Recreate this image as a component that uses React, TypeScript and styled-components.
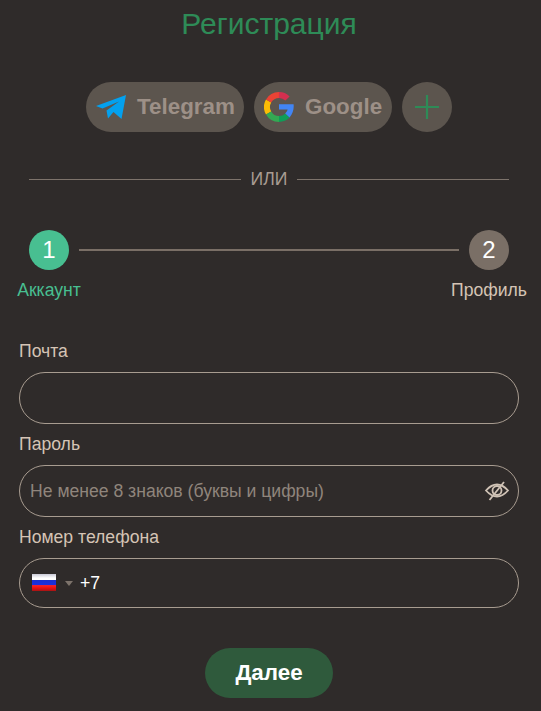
import { createGlobalStyle, styled } from 'styled-components';

const GlobalStyle = createGlobalStyle`
    html, body {
        margin: 0;
        padding: 0;
        background: #2f2b2a;
    }
    body {
        font-family: "Liberation Sans", Arial, sans-serif;
    }
`;

const Page = styled.div`
    width: 541px;
    height: 711px;
    overflow: hidden;
    box-sizing: border-box;
    padding: 8px 3px 0 0;
    background: #2f2b2a;
`;

const Title = styled.h1`
    margin: 0;
    text-align: center;
    font-size: 30px;
    line-height: 32px;
    font-weight: 400;
    color: #2e8b57;
`;

const Socials = styled.div`
    display: flex;
    justify-content: center;
    gap: 10px;
    margin-top: 42px;
`;

const SocialButton = styled.button<{ $width: number; $gap: number }>`
    display: flex;
    align-items: center;
    gap: ${(p) => p.$gap}px;
    width: ${(p) => p.$width}px;
    height: 50px;
    padding: 0 8px 0 10px;
    border: none;
    border-radius: 25px;
    background: #5c554e;
    color: #9d9087;
    font-family: inherit;
    font-size: 22.4px;
    font-weight: 700;

    svg {
        flex-shrink: 0;
    }
`;

const PlusButton = styled(SocialButton)`
    justify-content: center;
    padding: 0;
`;

const Divider = styled.div`
    display: flex;
    align-items: center;
    gap: 10px;
    margin: 38px 29px 0;
    height: 19px;
    font-size: 17.6px;
    color: #a89c92;

    &::before,
    &::after {
        content: '';
        flex: 1;
        height: 1px;
        background: #7d736b;
    }
`;

const Stepper = styled.div`
    display: flex;
    align-items: flex-start;
    gap: 10px;
    margin: 41px 29px 0;
`;

const Step = styled.div`
    display: flex;
    flex-direction: column;
    align-items: center;
    gap: 11px;
    width: 40px;
`;

const StepCircle = styled.div<{ $active?: boolean }>`
    display: flex;
    align-items: center;
    justify-content: center;
    width: 40px;
    height: 40px;
    border-radius: 50%;
    background: ${(p) => (p.$active ? '#48bf91' : '#7a6f66')};
    color: #fff;
    font-size: 24px;
`;

const StepLabel = styled.div<{ $active?: boolean }>`
    font-size: 17.6px;
    line-height: 18px;
    white-space: nowrap;
    color: ${(p) => (p.$active ? '#48bf91' : '#d5c4b5')};
`;

const StepLine = styled.div`
    flex: 1;
    height: 2px;
    margin-top: 19px;
    background: #7a6f66;
`;

const Form = styled.form`
    display: flex;
    flex-direction: column;
    margin: 43px 19px 0;
`;

const Label = styled.label`
    font-size: 17.6px;
    line-height: 18px;
    margin-bottom: 12px;
    color: #d5c4b5;
`;

const Field = styled.div<{ $height?: number }>`
    display: flex;
    align-items: center;
    box-sizing: border-box;
    height: ${(p) => p.$height ?? 52}px;
    margin-bottom: 11px;
    padding: 0 8px 0 10px;
    border: 1px solid #a89c90;
    border-radius: 26px;
`;

const Input = styled.input`
    flex: 1;
    min-width: 0;
    padding: 0;
    border: none;
    outline: none;
    background: transparent;
    color: #fff;
    font-family: inherit;
    font-size: 17.6px;

    &::placeholder {
        color: #8f857c;
        opacity: 1;
    }
`;

const Flag = styled.div`
    width: 24px;
    height: 17px;
    margin: -1px 0 0 2px;
    background: linear-gradient(
        to bottom,
        #c9c9d6 0%,
        #ffffff 24%,
        #ffffff 33%,
        #1a2fd0 38%,
        #1a2fe0 64%,
        #ff2020 68%,
        #e01010 85%,
        #a51515 100%
    );
`;

const Caret = styled.div`
    width: 0;
    height: 0;
    margin: 1px 7px 0 9px;
    border-left: 4px solid transparent;
    border-right: 4px solid transparent;
    border-top: 5px solid #7d736b;
`;

const DialCode = styled.span`
    font-size: 17.6px;
    color: #fff;
`;

const Actions = styled.div`
    display: flex;
    justify-content: center;
    margin-top: 29px;
`;

const NextButton = styled.button`
    width: 128px;
    height: 50px;
    border: none;
    border-radius: 25px;
    background: #2f5a3c;
    color: #fff;
    font-family: inherit;
    font-size: 22.4px;
    font-weight: 700;
`;

const TelegramIcon = () => (
    <svg width="30" height="25" viewBox="0 0 30 25">
        <path fill="#03a1ef" d="M0 11 L30 0 L25.5 24 L17.5 17 L12 23.5 L10.5 15.5 L23 6.5 L6.5 13.5 Z" />
    </svg>
);

const GoogleIcon = () => (
    <svg width="30" height="30" viewBox="0 0 30 30" fill="none">
        <path d="M4.6 9 A12 12 0 0 0 4.6 21" stroke="#fbbc05" strokeWidth="6" />
        <path d="M4.6 21 A12 12 0 0 0 15 27" stroke="#34a853" strokeWidth="6" />
        <path d="M15 27 A12 12 0 0 0 23.5 23.5" stroke="#0f9d58" strokeWidth="6" />
        <path d="M4.6 9 A12 12 0 0 1 15 3" stroke="#ea4335" strokeWidth="6" />
        <path d="M15 3 A12 12 0 0 1 23.5 6.5" stroke="#d32f4f" strokeWidth="6" />
        <path fill="#4285f4" d="M15 12.2 H29.6 C30.1 16.5 29 21.5 25.6 25.4 L21.2 21.4 C22.6 20.2 23.3 18.8 23.6 17.6 H15 Z" />
    </svg>
);

const PlusIcon = () => (
    <svg width="24" height="24" viewBox="0 0 24 24" fill="none" stroke="#2e8b57" strokeWidth="2.2">
        <path d="M12 0 V24 M0 12 H24" />
    </svg>
);

const EyeOffIcon = () => (
    <svg width="26" height="20" viewBox="0 0 26 20" fill="none" stroke="#cfc2b5" strokeWidth="1.8">
        <path d="M2 9.5 C6 5 9.5 3.5 13 3.5 C16.5 3.5 20 5 24 9.5 C20 14 16.5 15.5 13 15.5 C9.5 15.5 6 14 2 9.5 Z" />
        <circle cx="13" cy="9.5" r="4.5" />
        <path d="M20 1 L5.5 19" />
    </svg>
);

export default function App() {
    return (
        <Page>
            <GlobalStyle />
            <Title>Регистрация</Title>

            <Socials>
                <SocialButton $width={158} $gap={11} type="button">
                    <TelegramIcon />
                    <span>Telegram</span>
                </SocialButton>
                <SocialButton $width={138} $gap={11} type="button">
                    <GoogleIcon />
                    <span>Google</span>
                </SocialButton>
                <PlusButton $width={50} $gap={0} type="button">
                    <PlusIcon />
                </PlusButton>
            </Socials>

            <Divider>ИЛИ</Divider>

            <Stepper>
                <Step>
                    <StepCircle $active>1</StepCircle>
                    <StepLabel $active>Аккаунт</StepLabel>
                </Step>
                <StepLine />
                <Step>
                    <StepCircle>2</StepCircle>
                    <StepLabel>Профиль</StepLabel>
                </Step>
            </Stepper>

            <Form>
                <Label>Почта</Label>
                <Field>
                    <Input type="text" />
                </Field>

                <Label>Пароль</Label>
                <Field>
                    <Input type="password" placeholder="Не менее 8 знаков (буквы и цифры)" />
                    <EyeOffIcon />
                </Field>

                <Label>Номер телефона</Label>
                <Field $height={50}>
                    <Flag />
                    <Caret />
                    <DialCode>+7</DialCode>
                </Field>

                <Actions>
                    <NextButton type="button">Далее</NextButton>
                </Actions>
            </Form>
        </Page>
    );
}
